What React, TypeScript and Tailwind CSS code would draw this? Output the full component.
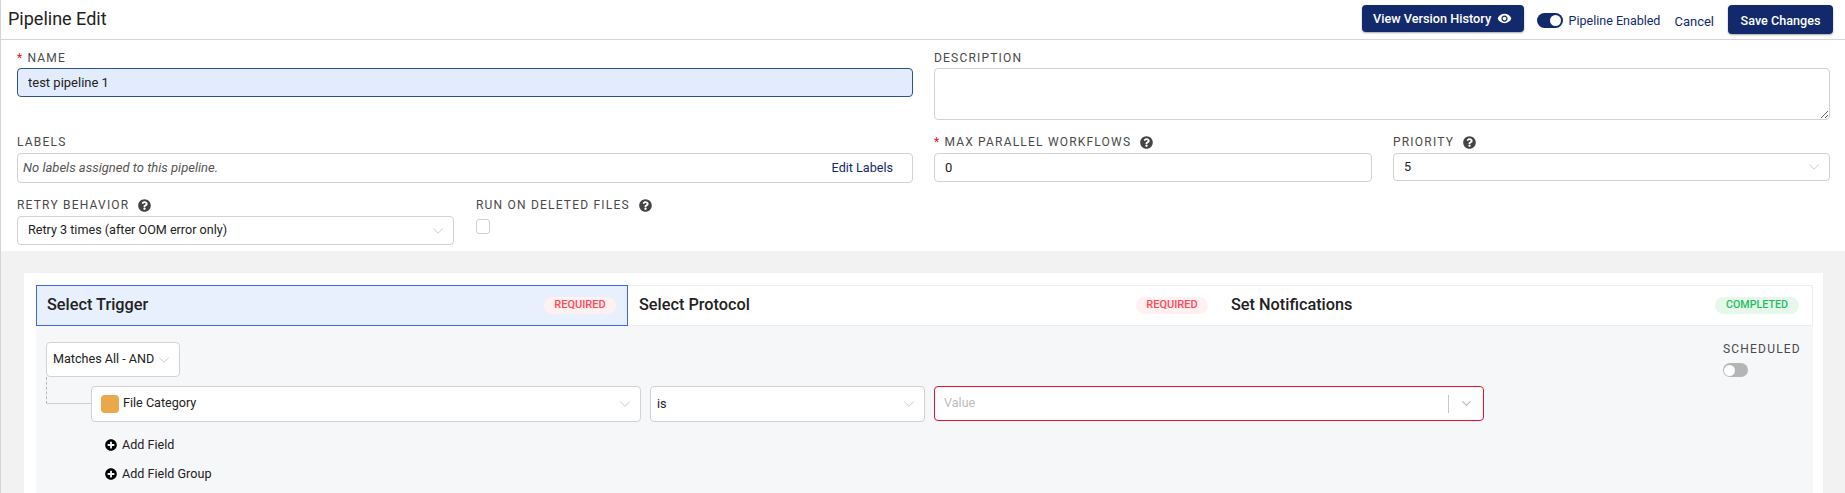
import { ChevronDown } from "lucide-react";
import { FaPlusCircle, FaQuestionCircle } from "react-icons/fa";
import { MdVisibility } from "react-icons/md";

const FieldLabel = ({
  text,
  required,
  help,
}: {
  text: string;
  required?: boolean;
  help?: boolean;
}) => (
  <div className="flex h-[14px] items-center text-[12px] leading-[14px] tracking-[1.2px] whitespace-nowrap text-[#4a4a4a] uppercase">
    {required && <span className="mr-[4px] text-[#e8112d]">*</span>}
    <span>{text}</span>
    {help && <FaQuestionCircle className="ml-[9px] text-[#444444]" size={13} />}
  </div>
);

const SelectBox = ({ value, className }: { value: string; className: string }) => (
  <div
    className={`flex items-center justify-between rounded-[4px] border border-[#d2d2d2] bg-white pr-[6px] pl-[10px] text-[12.6px] whitespace-nowrap text-[#222222] ${className}`}
  >
    <span>{value}</span>
    <ChevronDown size={18} strokeWidth={0.8} className="shrink-0 text-[#aaaaaa]" />
  </div>
);

const StepTab = ({
  title,
  status,
  active,
  className,
}: {
  title: string;
  status: string;
  active?: boolean;
  className: string;
}) => {
  const done = status === "COMPLETED";
  return (
    <div
      className={`flex items-center justify-between ${className} ${
        active ? "border border-[#4263eb] bg-[#e8effd] pl-[10px]" : "border-y border-[#ececec] bg-white pl-[11px]"
      }`}
    >
      <span className="text-[16.3px] font-medium text-[#222222]">{title}</span>
      <span
        className={`flex h-[17px] items-center justify-center rounded-full font-medium ${
          done ? "w-[84px] bg-[#e6f8ec] text-[10.7px] text-[#1fbf5c]" : "w-[72px] bg-[#fff1f1] text-[11px] text-[#ff4757]"
        }`}
      >
        {status}
      </span>
    </div>
  );
};

const AddLink = ({ text }: { text: string }) => (
  <div className="flex h-[14px] items-center gap-[5px] text-[12.6px] text-[#222222]">
    <FaPlusCircle size={12} className="text-black" />
    <span>{text}</span>
  </div>
);

export default function App() {
  return (
    <div className="h-[493px] overflow-hidden border-l border-[#d4d4d4] bg-white font-['Roboto',sans-serif]">
      <header className="flex h-[40px] items-start justify-between border-b border-[#d6d6d6] pt-[5px] pr-[12px] pl-[7px]">
        <h1 className="text-[18px] leading-[27px] text-[#222222]">Pipeline Edit</h1>
        <div className="flex items-start">
          <button className="flex h-[27px] w-[162px] items-center justify-center gap-[6px] rounded-[4px] bg-[#122a6b] text-[12.7px] font-medium text-white shadow-[0_1px_2px_rgba(0,0,0,0.35)]">
            View Version History
            <MdVisibility size={15} />
          </button>
          <div className="mt-[8px] ml-[13px] flex h-[15px] w-[26px] items-center justify-end rounded-full bg-[#122a6b] pr-[2px]">
            <span className="h-[11px] w-[11px] rounded-full bg-white" />
          </div>
          <span className="mt-[7px] ml-[6px] text-[12.5px] text-[#122a6b]">Pipeline Enabled</span>
          <span className="mt-[7px] ml-[14px] text-[13px] text-[#122a6b]">Cancel</span>
          <button className="ml-[14px] h-[29px] w-[105px] rounded-[4px] bg-[#122a6b] pt-[3px] text-[12.6px] font-medium text-white shadow-[0_1px_2px_rgba(0,0,0,0.35)]">
            Save Changes
          </button>
        </div>
      </header>

      <section className="h-[211px] pt-[11px] pr-[14px] pl-[16px]">
        <div className="grid grid-cols-[896px_896px] gap-x-[21px]">
          <div>
            <FieldLabel text="Name" required />
            <input
              readOnly
              value="test pipeline 1"
              className="mt-[3px] block h-[29px] w-full rounded-[4px] border border-[#2f5288] bg-[#e2ecfc] px-[10px] text-[13px] text-[#222222] outline-none"
            />
          </div>
          <div>
            <FieldLabel text="Description" />
            <textarea
              readOnly
              className="mt-[3px] block h-[52px] w-full resize-y rounded-[4px] border border-[#d2d2d2] bg-white outline-none"
            />
          </div>
        </div>

        <div className="mt-[15px] grid grid-cols-[896px_896px] gap-x-[21px]">
          <div>
            <FieldLabel text="Labels" />
            <div className="mt-[4px] flex h-[30px] items-center justify-between rounded-[4px] border border-[#d2d2d2] pr-[19px] pl-[5px] text-[13px]">
              <span className="text-[#555555] italic">No labels assigned to this pipeline.</span>
              <span className="text-[12.6px] text-[#122a6b]">Edit Labels</span>
            </div>
          </div>
          <div className="grid grid-cols-[438px_437px] gap-x-[21px]">
            <div>
              <FieldLabel text="Max Parallel Workflows" required help />
              <input
                readOnly
                value="0"
                className="mt-[4px] block h-[29px] w-full rounded-[4px] border border-[#d2d2d2] px-[10px] text-[13px] text-[#222222] outline-none"
              />
            </div>
            <div>
              <FieldLabel text="Priority" help />
              <SelectBox value="5" className="mt-[4px] h-[28px]" />
            </div>
          </div>
        </div>

        <div className="mt-[15px] flex gap-x-[22px]">
          <div className="w-[437px]">
            <FieldLabel text="Retry Behavior" help />
            <SelectBox value="Retry 3 times (after OOM error only)" className="mt-[4px] h-[29px]" />
          </div>
          <div>
            <FieldLabel text="Run on Deleted Files" help />
            <div className="mt-[7px] h-[15px] w-[14px] rounded-[3px] border border-[#cfcfcf] bg-white" />
          </div>
        </div>
      </section>

      <main className="h-[242px] bg-[#f2f2f2] pt-[22px] pr-[22px] pl-[23px]">
        <div className="h-full bg-white pt-[12px] pr-[10px] pl-[12px]">
          <div className="grid h-[41px] grid-cols-[592px_592px_593px]">
            <StepTab title="Select Trigger" status="REQUIRED" active className="pr-[11px]" />
            <StepTab title="Select Protocol" status="REQUIRED" className="pr-[12px]" />
            <StepTab title="Set Notifications" status="COMPLETED" className="border-r pr-[13px]" />
          </div>

          <div className="flex h-[170px] justify-between bg-[#f6f7f9] pt-[16px] pr-[12px] pl-[10px]">
            <div className="relative">
              <SelectBox value="Matches All - AND" className="h-[35px] w-[134px] !pl-[6px]" />
              {/* tree line from the group select down to the first rule */}
              <div className="absolute top-[35px] left-0 h-[27px] border-l border-dashed border-[#b5b5b5]" />
              <div className="absolute top-[61px] left-0 h-px w-[45px] bg-[#cfcfcf]" />
              <div className="mt-[9px] ml-[45px] flex items-start gap-x-[9px]">
                <div className="flex h-[36px] w-[550px] items-center justify-between rounded-[4px] border border-[#d2d2d2] bg-white pr-[6px] pl-[9px] text-[12.6px] text-[#222222]">
                  <div className="flex items-center gap-[4px]">
                    <span className="h-[18px] w-[18px] rounded-[4px] bg-[#eaa84c]" />
                    <span className="pb-[2px]">File Category</span>
                  </div>
                  <ChevronDown size={18} strokeWidth={0.8} className="text-[#aaaaaa]" />
                </div>
                <SelectBox value="is" className="h-[36px] w-[275px] !pl-[6px]" />
                <div className="flex h-[35px] w-[550px] items-center justify-between rounded-[4px] border border-[#e8112d] bg-white pr-[9px] pl-[9px] text-[12.6px] text-[#bdbdbd]">
                  <span>Value</span>
                  <div className="flex items-center gap-[10px]">
                    <span className="h-[18px] w-px bg-[#c8c8c8]" />
                    <ChevronDown size={15} strokeWidth={2} className="text-[#bbbbbb]" />
                  </div>
                </div>
              </div>
              <div className="mt-[16px] ml-[59px] flex flex-col gap-y-[15px]">
                <AddLink text="Add Field" />
                <AddLink text="Add Field Group" />
              </div>
            </div>

            <div className="w-[78px]">
              <FieldLabel text="Scheduled" />
              <div className="mt-[7px] flex h-[14px] w-[25px] items-center rounded-full bg-[#b5b5b5] pl-[1px]">
                <span className="h-[11px] w-[11px] rounded-full bg-white" />
              </div>
            </div>
          </div>
        </div>
      </main>
    </div>
  );
}
